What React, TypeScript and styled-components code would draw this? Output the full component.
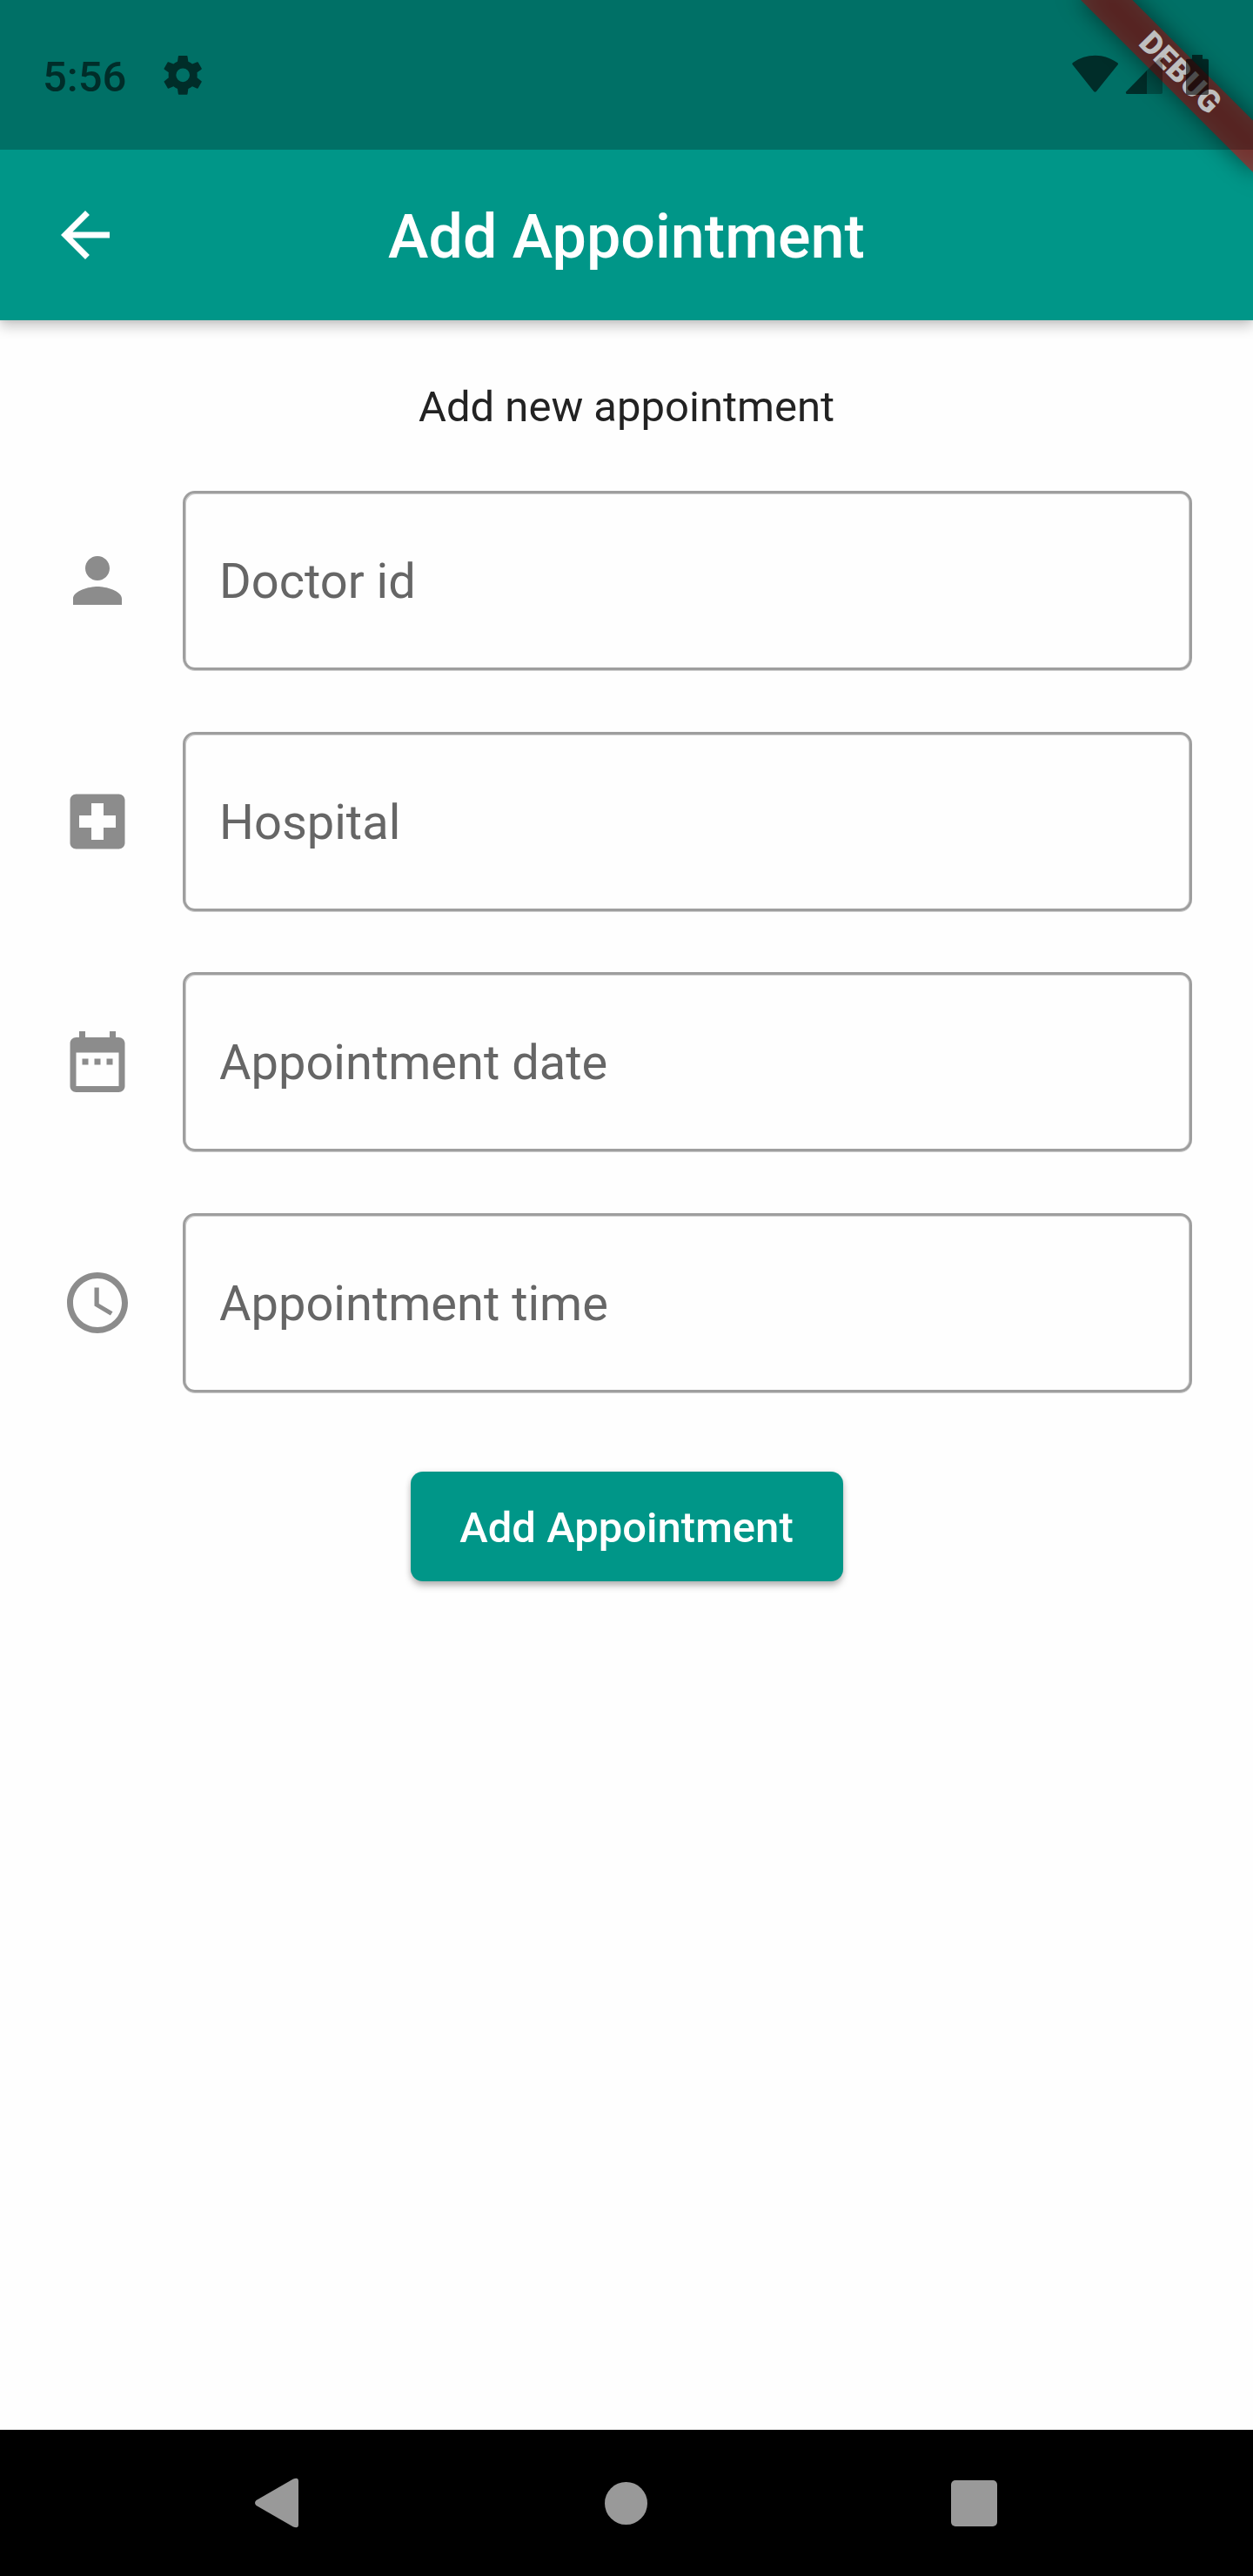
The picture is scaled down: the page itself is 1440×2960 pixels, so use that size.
import React from "react";
import styled, { createGlobalStyle } from "styled-components";

const teal = "#009688";
const statusInk = "rgba(0, 0, 0, 0.6)";

const GlobalStyle = createGlobalStyle`
  html, body { margin: 0; padding: 0; }
  body {
    background: #fefefe;
    font-family: Roboto, "Liberation Sans", sans-serif;
  }
  *, *::before, *::after { box-sizing: border-box; }
`;

const Screen = styled.div`
  position: relative;
  display: flex;
  flex-direction: column;
  width: 1440px;
  height: 2960px;
  overflow: hidden;
  background: #fefefe;
`;

const Header = styled.header`
  display: flex;
  flex-direction: column;
  flex: none;
  background: ${teal};
  box-shadow: 0 7px 14px rgba(0, 0, 0, 0.22), 0 1px 5px rgba(0, 0, 0, 0.06);
`;

const StatusBar = styled.div`
  position: relative;
  z-index: 2;
  display: flex;
  align-items: center;
  justify-content: space-between;
  height: 172px;
  padding: 0 50px 0 49px;
  background: rgba(0, 0, 0, 0.25);
`;

const StatusGroup = styled.div`
  display: flex;
  align-items: center;
  gap: 43px;
`;

const Clock = styled.span`
  font-size: 49px;
  font-weight: 500;
  line-height: 58px;
  padding-top: 5px;
  color: ${statusInk};
`;

const StatusIcon = styled.svg`
  display: block;
  fill: ${statusInk};
`;

const AppBar = styled.div`
  display: grid;
  grid-template-columns: 196px 1fr 196px;
  align-items: center;
  height: 196px;
`;

const BackButton = styled.button`
  display: flex;
  align-items: center;
  justify-content: center;
  width: 196px;
  height: 196px;
  padding: 0;
  border: 0;
  background: none;
  color: #fff;
`;

const Title = styled.h1`
  margin: 0;
  padding-top: 4px;
  text-align: center;
  font-size: 70px;
  font-weight: 500;
  line-height: 82px;
  white-space: nowrap;
  color: #fff;
`;

const Glyph = styled.svg`
  display: block;
  flex: none;
  width: 84px;
  height: 84px;
  fill: currentColor;
`;

const DebugRibbon = styled.div`
  position: absolute;
  z-index: 1;
  top: 98px;
  right: -140px;
  width: 280px;
  height: 42px;
  transform: rotate(45deg);
  transform-origin: 140px -98px;

  &::before {
    content: "";
    position: absolute;
    inset: 0;
    background: rgba(0, 0, 0, 0.498);
    filter: blur(13.9px);
  }
`;

const RibbonLabel = styled.div`
  position: relative;
  height: 42px;
  background: rgba(183, 28, 28, 0.627);
  text-align: center;
  font-size: 35.7px;
  font-weight: 900;
  line-height: 40px;
  letter-spacing: 0.3px;
  color: #fff;
`;

const Form = styled.main`
  display: flex;
  flex-direction: column;
  flex: 1;
  padding: 71px 70px 0;
`;

const Heading = styled.p`
  margin: 0 0 67px;
  text-align: center;
  font-size: 49px;
  line-height: 58px;
  color: #222;
`;

const Fields = styled.div`
  display: flex;
  flex-direction: column;
  gap: 70.5px;
`;

const FieldRow = styled.label`
  display: flex;
  align-items: center;
  gap: 56px;
  height: 206px;
  color: #8c8c8c;
`;

const FieldBox = styled.span`
  display: flex;
  align-items: center;
  flex: 1;
  height: 206px;
  padding: 2px 39px 0;
  border: 3px solid #9e9e9e;
  border-radius: 14px;
  box-shadow: inset 1px 1px 0 #cecece, inset -1px 0 0 #cecece, 0 1px 0 #cecece;
  font-size: 56px;
  line-height: 66px;
  color: #666;
`;

const SubmitButton = styled.button`
  align-self: center;
  width: 497px;
  height: 126px;
  margin-top: 91px;
  padding: 4px 0 0;
  border: 0;
  border-radius: 14px;
  background: ${teal};
  box-shadow: 0 6px 8px -1px rgba(0, 0, 0, 0.26), 0 1px 7px rgba(0, 0, 0, 0.12);
  font-family: inherit;
  font-size: 49px;
  font-weight: 500;
  line-height: 58px;
  white-space: nowrap;
  color: #fff;
`;

const NavBar = styled.nav`
  display: grid;
  grid-template-columns: 400px 402px 398px;
  justify-content: center;
  align-items: center;
  justify-items: center;
  flex: none;
  height: 168px;
  padding-right: 4px;
  background: #000;
`;

const NavIcon = styled.svg`
  display: block;
  fill: #999;
`;

const fields = [
  {
    label: "Doctor id",
    path: "M12 12c2.21 0 4-1.79 4-4s-1.79-4-4-4-4 1.79-4 4 1.79 4 4 4zm0 2c-2.67 0-8 1.34-8 4v2h16v-2c0-2.66-5.33-4-8-4z",
  },
  {
    label: "Hospital",
    path: "M19 3H5c-1.1 0-1.99.9-1.99 2L3 19c0 1.1.9 2 2 2h14c1.1 0 2-.9 2-2V5c0-1.1-.9-2-2-2zm-1 11h-4v4h-4v-4H6v-4h4V6h4v4h4v4z",
  },
  {
    label: "Appointment date",
    path: "M9 11H7v2h2v-2zm4 0h-2v2h2v-2zm4 0h-2v2h2v-2zm2-7h-1V2h-2v2H8V2H6v2H5c-1.11 0-1.99.9-1.99 2L3 20c0 1.1.89 2 2 2h14c1.1 0 2-.9 2-2V6c0-1.1-.9-2-2-2zm0 16H5V9h14v11z",
  },
  {
    label: "Appointment time",
    path: "M11.99 2C6.47 2 2 6.48 2 12s4.47 10 9.99 10C17.52 22 22 17.52 22 12S17.52 2 11.99 2zM12 20c-4.42 0-8-3.58-8-8s3.58-8 8-8 8 3.58 8 8-3.58 8-8 8zm.5-13H11v6l5.25 3.15.75-1.23-4.5-2.67z",
  },
];

export default function App() {
  return (
    <>
      <GlobalStyle />
      <Screen>
        <Header>
          <StatusBar>
            <StatusGroup>
              <Clock>5:56</Clock>
              <StatusIcon width="44" height="46" viewBox="562 189 132 138">
                <path
                  fillRule="evenodd"
                  d="M615 192H642Q644 192 644.500 194L647 212Q655 215.500 661 220.500L678 213.500Q680 213 681 214.500L693 235.500Q694 237.500 692.500 239L677.500 250Q678.500 259 677.500 268L692.500 279.500Q694 281 693 283L681 304Q680 305.500 678 305L661 298Q655 302.500 647 306L644.500 324Q644 326 642 326H615Q613 326 612.500 324L610 306Q602 302.500 596 298L579 305Q577 305.500 576 304L564 283Q563 281 564.500 279.500L579.500 268Q578.500 259 579.500 250L564.500 239Q563 237.500 564 235.500L576 214.500Q577 213 579 213.500L596 220.500Q602 215.500 610 212L612.500 194Q613 192 615 192ZM628.500 235.500a23.500 23.500 0 1 0 0 47a23.500 23.500 0 1 0 0-47Z"
                />
              </StatusIcon>
            </StatusGroup>
            <StatusIcon width="158" height="46" viewBox="216 189 474 138">
              <path d="M219 224Q214 219 220 215.500C243 199 268 191 296 191S348 199 371 215.500Q378 219 373 224L300 315Q295.500 320 291 315Z" />
              <path d="M474 243V324H406Q399 323 403 316Z" />
              <path
                opacity="0.5"
                d="M474 243L518 199Q527 194 528 203V319Q528 324 523 324H474Z"
              />
              <path d="M630 189H666V203H682Q687 203 687 208V322Q687 327 682 327H614Q609 327 609 322V208Q609 203 614 203H630Z" />
            </StatusIcon>
          </StatusBar>
          <AppBar>
            <BackButton aria-label="Back">
              <Glyph viewBox="0 0 24 24">
                <path d="M20 11H7.830l5.590-5.590L12 4l-8 8 8 8 1.410-1.410L7.830 13H20v-2z" />
              </Glyph>
            </BackButton>
            <Title>Add Appointment</Title>
          </AppBar>
        </Header>
        <Form>
          <Heading>Add new appointment</Heading>
          <Fields>
            {fields.map((f) => (
              <FieldRow key={f.label}>
                <Glyph viewBox="0 0 24 24">
                  <path d={f.path} />
                </Glyph>
                <FieldBox>{f.label}</FieldBox>
              </FieldRow>
            ))}
          </Fields>
          <SubmitButton>Add Appointment</SubmitButton>
        </Form>
        <NavBar>
          <NavIcon width="50" height="58" viewBox="0 0 50 58">
            <path d="M1.500 26L44 1.500Q50 -1 50 4V54Q50 59 44 56.500L1.500 32Q-1.500 29 1.500 26Z" />
          </NavIcon>
          <NavIcon width="49" height="49" viewBox="0 0 49 49">
            <circle cx="24.500" cy="24.500" r="24.500" />
          </NavIcon>
          <NavIcon width="53" height="53" viewBox="0 0 53 53">
            <rect width="53" height="53" rx="5" />
          </NavIcon>
        </NavBar>
        <DebugRibbon>
          <RibbonLabel>DEBUG</RibbonLabel>
        </DebugRibbon>
      </Screen>
    </>
  );
}
